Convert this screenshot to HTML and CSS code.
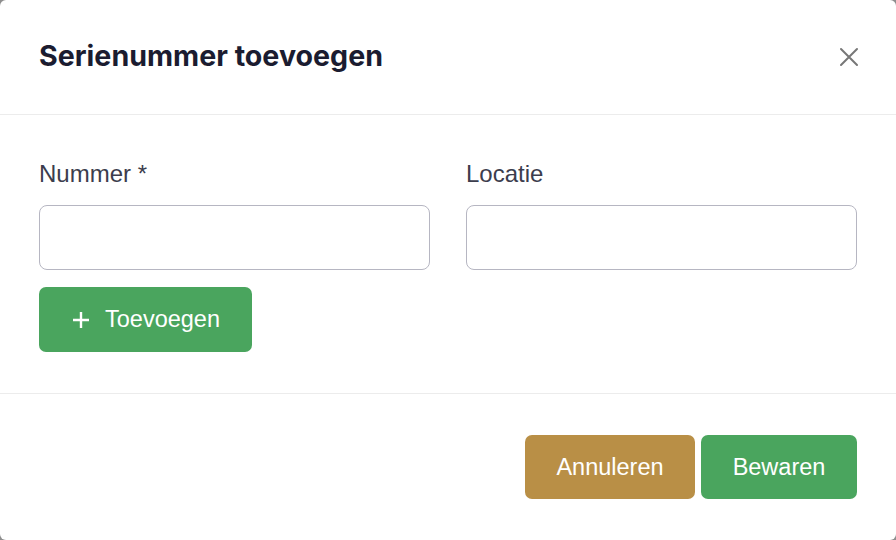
FILE: index.html
```html
<!DOCTYPE html>
<html lang="nl">
<head>
<meta charset="UTF-8">
<meta name="viewport" content="width=device-width, initial-scale=1.0">
<title>Serienummer toevoegen</title>
<link rel="stylesheet" href="styles.css">
</head>
<body>

<div class="modal">
  <div class="modal-header">
    <h2 class="modal-title">Serienummer toevoegen</h2>
    <button class="close-btn" aria-label="Sluiten">
      <svg width="20" height="20" viewBox="0 0 20 20">
        <path d="M2 2 L18 18 M18 2 L2 18" stroke="#777" stroke-width="2" stroke-linecap="round" fill="none"/>
      </svg>
    </button>
  </div>

  <div class="modal-body">
    <div class="form-row">
      <div class="field">
        <label for="nummer">Nummer *</label>
        <input type="text" id="nummer">
      </div>
      <div class="field">
        <label for="locatie">Locatie</label>
        <input type="text" id="locatie">
      </div>
    </div>
    <button class="btn btn-green btn-add">
      <svg width="20" height="20" viewBox="0 0 20 20">
        <path d="M10 2 V18 M2 10 H18" stroke="#fff" stroke-width="2.4" fill="none"/>
      </svg>
      Toevoegen
    </button>
  </div>

  <div class="modal-footer">
    <button class="btn btn-gold btn-cancel">Annuleren</button>
    <button class="btn btn-green btn-save">Bewaren</button>
  </div>
</div>

</body>
</html>
```

FILE: styles.css
```css
:root {
  --green: #4aa55e;
  --gold: #b98f46;
  --title: #1b1c30;
  --label: #3c3d4d;
  --line: #ececec;
}
body {
  margin: 0;
  background: #8e8e8e;
  font-family: 'Liberation Sans', Arial, sans-serif;
}
.modal {
  width: 896px;
  height: 540px;
  background: #fff;
  border-radius: 6px;
  display: flex;
  flex-direction: column;
  overflow: hidden;
}
.modal-header {
  height: 115px;
  padding: 0 35px 0 39px;
  display: flex;
  align-items: center;
  justify-content: space-between;
  border-bottom: 1px solid var(--line);
  box-sizing: border-box;
  flex-shrink: 0;
}
.modal-title {
  margin: 0;
  font-family: Inter, 'Liberation Sans', sans-serif;
  font-weight: 700;
  font-size: 28.6px;
  color: var(--title);
  padding-bottom: 3px;
}
.close-btn {
  border: none;
  background: none;
  padding: 0;
  width: 24px;
  height: 24px;
  display: flex;
  align-items: center;
  justify-content: center;
  cursor: pointer;
}
.modal-body {
  padding: 45px 39px 41px;
  border-bottom: 1px solid var(--line);
}
.form-row {
  display: grid;
  grid-template-columns: 1fr 1fr;
  gap: 36px;
}
.field {
  display: flex;
  flex-direction: column;
}
.field label {
  font-size: 24px;
  line-height: 27px;
  color: var(--label);
  margin-bottom: 18px;
}
.field input {
  height: 65px;
  box-sizing: border-box;
  border: 1px solid #b6b6c2;
  border-radius: 8px;
  font-size: 22px;
  padding: 0 16px;
  outline: none;
}
.btn {
  border: none;
  border-radius: 7px;
  color: #fff;
  font-family: 'Liberation Sans', Arial, sans-serif;
  font-size: 23.5px;
  cursor: pointer;
  display: flex;
  align-items: center;
  justify-content: center;
}
.btn-green { background: var(--green); }
.btn-gold { background: var(--gold); }
.btn-add {
  margin-top: 17px;
  width: 213px;
  height: 65px;
  gap: 14px;
  padding-right: 6px;
}
.modal-footer {
  flex: 1;
  display: flex;
  justify-content: flex-end;
  align-items: center;
  gap: 6px;
  padding: 0 39px;
}
.btn-cancel {
  width: 170px;
  height: 64px;
}
.btn-save {
  width: 156px;
  height: 64px;
}
```
